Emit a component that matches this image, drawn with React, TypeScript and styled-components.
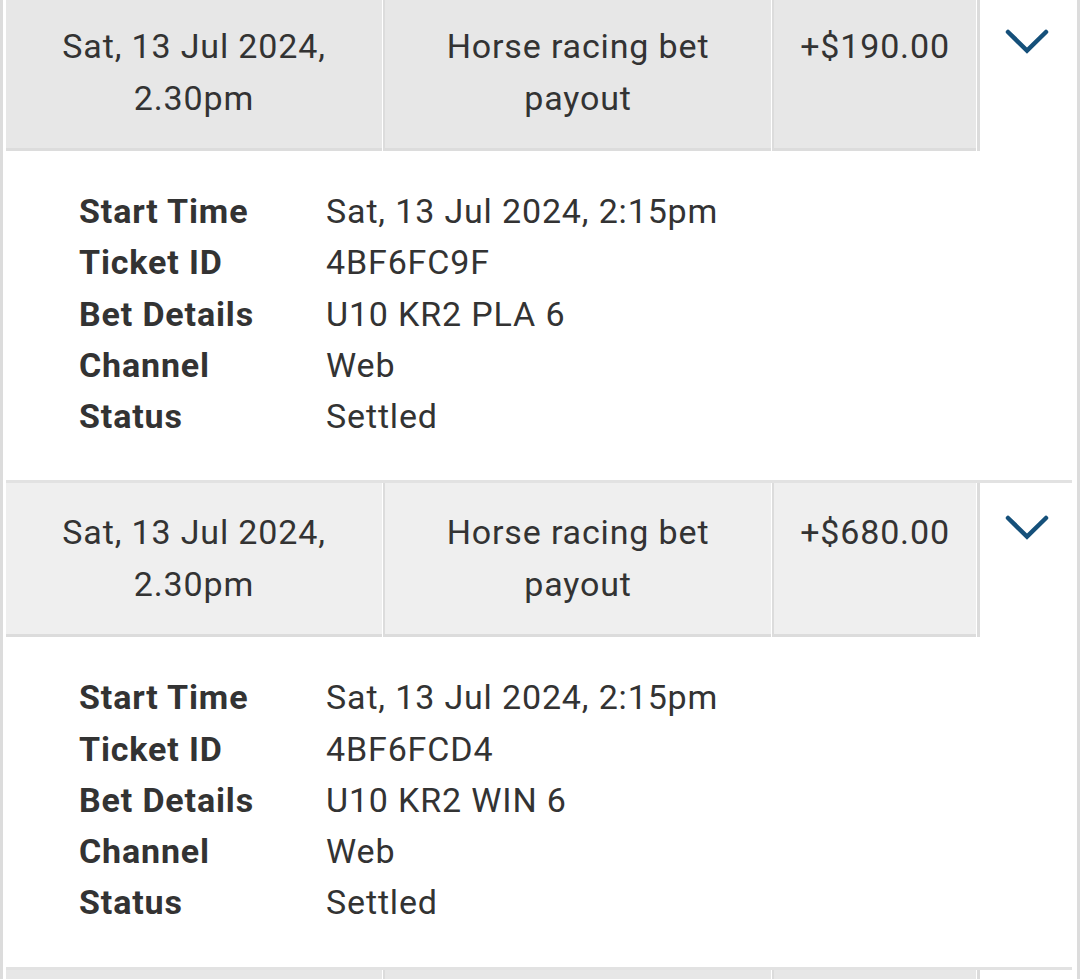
import React from "react";
import styled, { createGlobalStyle } from "styled-components";

const GlobalStyle = createGlobalStyle`
  html, body {
    margin: 0;
    padding: 0;
    background: #ffffff;
  }
  body {
    font-family: Roboto, "Noto Sans", "Liberation Sans", sans-serif;
    color: #333333;
    overflow: hidden;
  }
`;

const List = styled.div`
  margin-top: -6px;
  border-left: 3px solid #dcdcdc;
  border-right: 3px solid #dcdcdc;
  padding: 0 3px;
  background: #ffffff;
`;

const Entry = styled.section``;

const HeaderRow = styled.div`
  display: grid;
  grid-template-columns: 376px 388px 204px 1fr;
  column-gap: 1px;
  border-top: 3px solid #e2e2e2;
  margin-right: 2px;
`;

const HeaderCell = styled.div<{ $shade: string; $first?: boolean }>`
  background: ${(p) => p.$shade};
  border-left: ${(p) => (p.$first ? "none" : "2px solid #dcdcdc")};
  border-bottom: 3px solid #dcdcdc;
  padding: 23px 16px 24px;
  font-size: 34px;
  line-height: 52px;
  letter-spacing: 0.85px;
  text-align: center;
  color: #333333;
`;

const ToggleCell = styled.div`
  border-left: 3px solid #dcdcdc;
  display: flex;
  justify-content: center;
  align-items: flex-start;
  padding-top: 32px;
  margin-right: -2px;
`;

const Chevron = styled.svg`
  width: 44px;
  height: 25px;
  display: block;
`;

const Details = styled.dl`
  margin: 0;
  padding: 35px 0 38px 73px;
  display: grid;
  grid-template-columns: 247px 1fr;
  font-size: 34px;
  line-height: 51.25px;
  letter-spacing: 0.85px;
  color: #333333;
`;

const Label = styled.dt`
  font-weight: 700;
  margin: 0;
`;

const Value = styled.dd`
  margin: 0;
`;

type Bet = {
  date: string;
  time: string;
  type: string;
  amount: string;
  start: string;
  ticket: string;
  details: string;
  channel: string;
  status: string;
  shade: string;
};

const bets: Bet[] = [
  {
    date: "Sat, 13 Jul 2024,",
    time: "2.30pm",
    type: "Horse racing bet payout",
    amount: "+$190.00",
    start: "Sat, 13 Jul 2024, 2:15pm",
    ticket: "4BF6FC9F",
    details: "U10 KR2 PLA 6",
    channel: "Web",
    status: "Settled",
    shade: "#e7e7e7",
  },
  {
    date: "Sat, 13 Jul 2024,",
    time: "2.30pm",
    type: "Horse racing bet payout",
    amount: "+$680.00",
    start: "Sat, 13 Jul 2024, 2:15pm",
    ticket: "4BF6FCD4",
    details: "U10 KR2 WIN 6",
    channel: "Web",
    status: "Settled",
    shade: "#efefef",
  },
  {
    date: "Sat, 13 Jul 2024,",
    time: "2.10pm",
    type: "Horse racing bet",
    amount: "-$100.00",
    start: "Sat, 13 Jul 2024, 2:15pm",
    ticket: "4BF6FC9F",
    details: "U10 KR2 PLA 6",
    channel: "Web",
    status: "Settled",
    shade: "#e7e7e7",
  },
];

const ChevronIcon = () => (
  <Chevron viewBox="0 0 44 25" aria-hidden="true">
    <polyline
      points="3,3 22,21.5 41,3"
      fill="none"
      stroke="#15507a"
      strokeWidth="4.5"
      strokeLinecap="round"
      strokeLinejoin="miter"
    />
  </Chevron>
);

export default function App() {
  return (
    <>
      <GlobalStyle />
      <List>
        {bets.map((b, i) => (
          <Entry key={i}>
            <HeaderRow>
              <HeaderCell $shade={b.shade} $first>
                {b.date}
                <br />
                {b.time}
              </HeaderCell>
              <HeaderCell $shade={b.shade}>{b.type}</HeaderCell>
              <HeaderCell $shade={b.shade}>{b.amount}</HeaderCell>
              <ToggleCell>
                <ChevronIcon />
              </ToggleCell>
            </HeaderRow>
            <Details>
              <Label>Start Time</Label>
              <Value>{b.start}</Value>
              <Label>Ticket ID</Label>
              <Value>{b.ticket}</Value>
              <Label>Bet Details</Label>
              <Value>{b.details}</Value>
              <Label>Channel</Label>
              <Value>{b.channel}</Value>
              <Label>Status</Label>
              <Value>{b.status}</Value>
            </Details>
          </Entry>
        ))}
      </List>
    </>
  );
}
